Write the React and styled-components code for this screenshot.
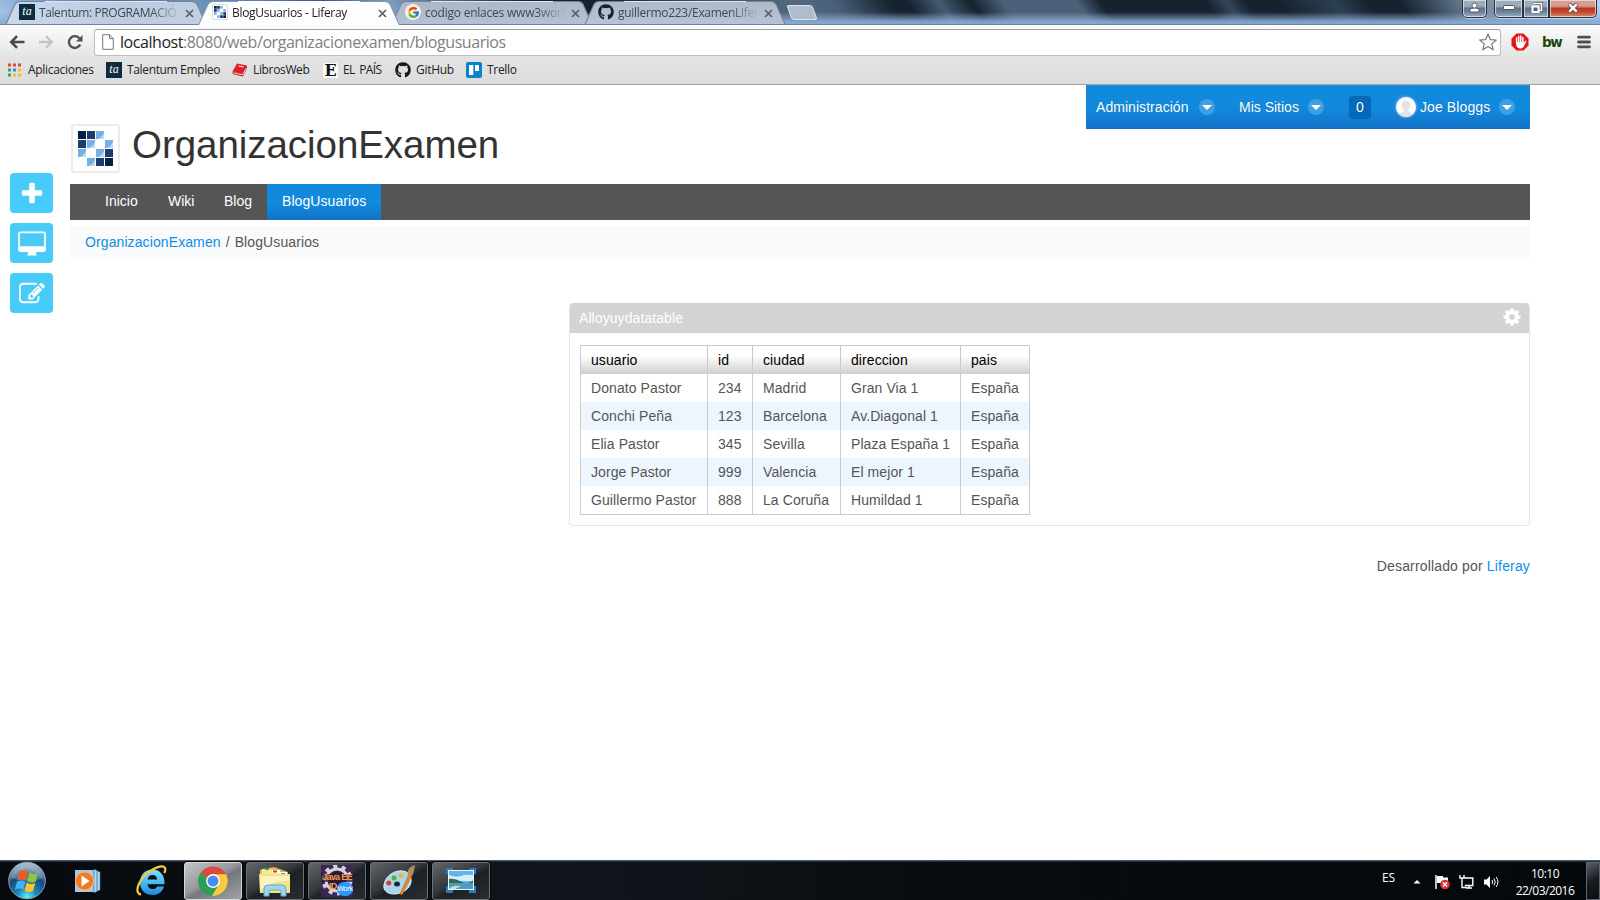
import React from "react";
import styled, { createGlobalStyle } from "styled-components";
import { FaGithub } from "react-icons/fa";
import { FcGoogle } from "react-icons/fc";

const Global = createGlobalStyle`
  *, *::before, *::after { box-sizing: border-box; }
  body { margin: 0; background: #fff; overflow: hidden; }
`;

const UI_FONT = `"Open Sans", "Noto Sans", sans-serif`;
const PAGE_FONT = `"Liberation Sans", Arial, sans-serif`;

const Screen = styled.div`
  width: 1600px;
  height: 900px;
  display: flex;
  flex-direction: column;
  background: #fff;
  font-family: ${PAGE_FONT};
  font-size: 14px;
  color: #555;
  white-space: nowrap;
`;

/* ---------- window frame ---------- */

const TitleBar = styled.header`
  height: 25px;
  flex: none;
  display: flex;
  align-items: flex-start;
  padding-left: 5px;
  border-bottom: 1px solid #6b84a3;
  background:
    linear-gradient(180deg, rgba(136,172,212,0) 0 50%, rgba(136,172,212,.9) 90%, rgba(136,172,212,.95)),
    linear-gradient(55deg, #a9c8ea 0%, #7fa3cc 3%, #4e6c92 8%, #6f93bd 13%, #5d7da5 17%, #3c5577 21%, #7d9cc1 25%, #34455d 31%, #141f2c 34%, #15202c 38%, #3d5269 45%, #526980 50%, #4a6078 52.5%, #16222e 56%, #16222e 57%, #445a72 59%, #16222e 61%, #4c6078 63%, #4c6078 67.5%, #16222e 69%, #16222e 75.5%, #33475b 76.8%, #16222e 78%, #16222e 80%, #2d4053 83.5%, #16222e 85.5%, #16222e 87.5%, #45586d 90%, #76899e 92%, #8da8c4 96%, #b4d0ee 100%);
`;

const Tab = styled.div`
  position: relative;
  width: 202px;
  height: ${(p) => (p.$active ? 25 : 24)}px;
  margin-right: -9px;
  padding: 0 10px ${(p) => (p.$active ? 1 : 0)}px 14px;
  display: flex;
  align-items: center;
  z-index: ${(p) => (p.$active ? 2 : 1)};
  color: ${(p) => (p.$active ? "#222" : "#3f4955")};
  font: 12px/22px ${UI_FONT};
  &::before, &::after {
    content: "";
    position: absolute;
    inset: 0;
  }
  &::before {
    z-index: -2;
    background: ${(p) => (p.$active ? "linear-gradient(90deg, #8199b5 20%, #fff 20% 80%, #8199b5 80%)" : "linear-gradient(90deg, #71849c 20%, #dfe7f0 20% 80%, #71849c 80%)")};
    clip-path: path("M0 25L9.500 4Q11 1 15 1H187Q191 1 192.500 4L202 25z");
  }
  &::after {
    z-index: -1;
    background: ${(p) => p.$fill};
    clip-path: path("M1.200 25L10.500 4.500Q12 2 15 2H187Q190 2 191.500 4.500L200.800 25z");
  }
`;

const TabLabel = styled.span`
  width: 141px;
  margin: 1px 0 0 4px;
  overflow: hidden;
  letter-spacing: ${(p) => p.$track}px;
  mask-image: linear-gradient(90deg, #000 ${(p) => (p.$fade ? 112 : 141)}px, transparent 141px);
`;

const Cross = styled.svg`
  flex: none;
  width: 9px;
  height: 9px;
  margin: 3px 0 0 5px;
`;

const NewTab = styled.div`
  width: 26px;
  height: 15px;
  margin: 5px 0 0 12px;
  transform: skewX(20deg);
  border: 1px solid #dfe6ee;
  border-radius: 3px;
  background: #aebccd;
`;

const WindowButtons = styled.div`
  margin-left: auto;
  margin-right: 3px;
  display: flex;
`;

const WinButton = styled.div`
  width: ${(p) => p.$w}px;
  height: 18px;
  margin-right: ${(p) => p.$gap || 0}px;
  display: flex;
  align-items: center;
  justify-content: center;
  border: 1px solid #26323f;
  border-top: 0;
  border-radius: ${(p) => p.$radius};
  box-shadow: inset 0 0 0 1px rgba(235,243,250,.65), 0 1px 0 rgba(255,255,255,.5);
  background: ${(p) => p.$close
    ? "linear-gradient(#d99c90 0 35%, #b93a20 50%, #c2452b 70%, #dd8d6d)"
    : "linear-gradient(#9dacbb 0 35%, #63758a 50%, #6d8198 70%, #9ab1c9)"};
  svg { margin-top: -2px; }
`;

/* ---------- browser chrome ---------- */

const Chrome = styled.div`
  height: 60px;
  flex: none;
  border-bottom: 1px solid #a3a3a3;
  background: linear-gradient(#fcfcfc, #e3e3e3 55%, #dcdcdc);
`;

const Toolbar = styled.div`
  height: 34px;
  padding: 4px 0 4px 9px;
  display: flex;
  align-items: center;
`;

const ToolIcon = styled.svg`
  flex: none;
  width: ${(p) => p.$w || 16}px;
  height: ${(p) => p.$h || 16}px;
  margin-left: ${(p) => p.$before || 0}px;
  margin-right: ${(p) => p.$gap || 0}px;
`;

const Omnibox = styled.div`
  flex: none;
  width: 1407px;
  height: 27px;
  padding: 0 3px 0 7px;
  display: flex;
  align-items: center;
  background: #fff;
  border: 1px solid #bdbdbd;
  border-top-color: #9f9f9f;
  border-radius: 3px;
`;

const Url = styled.span`
  flex: 1;
  padding-left: 6px;
  font: 16px/24px ${UI_FONT};
  letter-spacing: -0.44px;
  color: #808080;
  b { font-weight: 400; color: #1d1d1d; }
`;

const Bw = styled.span`
  width: 21px;
  margin: 0 14px 0 13px;
  font: 700 13.500px/16px "DejaVu Sans", sans-serif;
  letter-spacing: -1.5px;
  color: #164a0c;
`;

const Bookmarks = styled.nav`
  height: 25px;
  padding: 0 0 3px 6px;
  display: flex;
  align-items: center;
`;

const Bookmark = styled.a`
  width: ${(p) => p.$w}px;
  display: flex;
  align-items: center;
  gap: 5px;
  font: 12px/20px ${UI_FONT};
  letter-spacing: ${(p) => p.$track}px;
  word-spacing: ${(p) => p.$words || 0}px;
  color: #222;
  svg, i { flex: none; }
`;

const TaBadge = styled.i`
  width: 16px;
  height: 16px;
  flex: none;
  background: #0d2c40;
  color: #fff;
  font: italic 12px/14px "Liberation Serif", serif;
  letter-spacing: 0;
  text-align: center;
`;

const SerifBadge = styled.i`
  width: 15px;
  height: 15px;
  background: #fafafa;
  color: #111;
  font: 700 16px/15px "DejaVu Serif", serif;
  letter-spacing: 0;
  text-align: center;
`;

/* ---------- portal page ---------- */

const Page = styled.main`
  flex: 1;
  display: flex;
  min-height: 0;
`;

const Rail = styled.aside`
  width: 70px;
  padding: 88px 0 0 10px;
  display: flex;
  flex-direction: column;
  gap: 10px;
`;

const RailButton = styled.button`
  width: 43px;
  height: 40px;
  padding: 0;
  border: 0;
  border-radius: 4px;
  background: #47cbf8;
  display: flex;
  align-items: center;
  justify-content: center;
  svg { width: 26px; height: 26px; fill: #fff; overflow: visible; }
`;

const Portal = styled.div`
  width: 1460px;
`;

const Top = styled.div`
  height: 99px;
  display: flex;
  justify-content: space-between;
`;

const Brand = styled.div`
  padding: 39px 0 0 1px;
  display: flex;
  align-items: flex-start;
`;

const LogoFrame = styled.div`
  width: 49px;
  height: 49px;
  padding: 5px;
  border: 2px solid #ebebeb;
  border-radius: 3px;
`;

const Title = styled.h1`
  margin: 0 0 0 12px;
  font-size: 38.5px;
  line-height: 41px;
  font-weight: 400;
  letter-spacing: -0.05px;
  color: #333;
`;

const Dockbar = styled.div`
  width: 444px;
  height: 44px;
  padding: 0 0 1px 10px;
  display: flex;
  align-items: center;
  color: #fff;
  background: linear-gradient(#118ade 0 50%, #1272c8);
  border-top: 1px solid #1597ea;
`;

const DockItem = styled.div`
  width: ${(p) => p.$w}px;
  display: flex;
  align-items: center;
  letter-spacing: ${(p) => p.$track || 0}px;
  text-shadow: 0 0 1px rgba(0,0,0,.2);
`;

const Caret = styled.i`
  width: 16px;
  height: 16px;
  margin-left: ${(p) => p.$gap}px;
  border-radius: 50%;
  background: #3f9fe3;
  display: flex;
  align-items: center;
  justify-content: center;
  &::before {
    content: "";
    border: 5px solid transparent;
    border-top-color: #fff;
    border-bottom: 0;
  }
`;

const Count = styled.div`
  width: 22px;
  height: 23px;
  border-radius: 4px;
  background: #0668b8;
  text-align: center;
  line-height: 23px;
`;

const Avatar = styled.div`
  width: 20px;
  height: 20px;
  margin-right: 4px;
  border-radius: 50%;
  overflow: hidden;
  background: #fff;
  box-shadow: 0 0 2px 1px #6b9ff0;
`;

const Nav = styled.nav`
  height: 36px;
  padding-left: 20px;
  display: flex;
  background: #555;
`;

const NavItem = styled.a`
  width: ${(p) => p.$w}px;
  padding-left: 15px;
  line-height: 34px;
  letter-spacing: ${(p) => (p.$active ? 0.08 : 0)}px;
  color: #fff;
  background: ${(p) => (p.$active ? "linear-gradient(#118ade 0 50%, #1272c8)" : "none")};
`;

const Breadcrumb = styled.div`
  height: 32px;
  margin-top: 6px;
  padding-left: 15px;
  border-radius: 3px;
  background: #fafafa;
  line-height: 32px;
  letter-spacing: 0.1px;
`;

const Slash = styled.span`
  margin: 0 5px;
`;

const Link = styled.a`
  color: #0d8ee8;
`;

const Portlet = styled.section`
  width: 961px;
  height: 223px;
  margin: 45px 0 0 auto;
  border: 1px solid #e6e6e6;
  border-top: 0;
  border-radius: 4px;
  overflow: hidden;
`;

const PortletHead = styled.div`
  height: 30px;
  margin: 0 -1px;
  padding: 0 8px 0 10px;
  display: flex;
  align-items: center;
  justify-content: space-between;
  color: #fff;
  letter-spacing: 0.08px;
  background: #d3d3d3;
  svg { width: 20px; height: 20px; fill: #fff; margin-top: -3px; }
`;

const Table = styled.table`
  margin: 12px 0 0 10px;
  table-layout: fixed;
  width: 450px;
  border-collapse: separate;
  border-spacing: 0;
  border: 1px solid #cbcbcb;
  letter-spacing: 0.08px;
`;

const Th = styled.th`
  width: ${(p) => p.$w}px;
  height: 28px;
  padding: 0 0 0 10px;
  border-left: ${(p) => (p.$first ? 0 : 1)}px solid #cbcbcb;
  text-align: left;
  font-weight: 400;
  color: #000;
  background: linear-gradient(#fff 0 35%, #cecece);
`;

const Row = styled.tr`
  background: ${(p) => (p.$odd ? "#edf5ff" : "#fff")};
`;

const Td = styled.td`
  height: 28px;
  padding: 0 0 0 10px;
  border-left: ${(p) => (p.$first ? 0 : 1)}px solid #cbcbcb;
`;

const Footer = styled.footer`
  margin-top: 30px;
  text-align: right;
  line-height: 20px;
  letter-spacing: 0.16px;
`;

/* ---------- taskbar ---------- */

const Taskbar = styled.footer`
  height: 40px;
  flex: none;
  display: flex;
  align-items: center;
  border-top: 1px solid #4a5561;
  box-shadow: inset 0 1px 0 #26303a;
  background: linear-gradient(90deg, #06090d, #10161c 35%, #080c10 60%, #05080b);
`;

const Launcher = styled.div`
  width: ${(p) => p.$w}px;
  height: 39px;
  padding-right: ${(p) => p.$shift || 0}px;
  display: flex;
  align-items: center;
  justify-content: center;
`;

const TaskButton = styled.div`
  width: 58px;
  height: 38px;
  margin-right: 4px;
  display: flex;
  align-items: center;
  justify-content: center;
  border: 1px solid ${(p) => (p.$active ? "#d5d7d9" : "#6b7177")};
  border-radius: 3px;
  box-shadow: 0 0 0 1px #05080b;
  background: ${(p) => p.$active
    ? "linear-gradient(150deg, #c3c5c7, #96999c 45%, #74787c 55%, #a1a4a7)"
    : "linear-gradient(150deg, #62676b, #33383d 45%, #1c2126 55%, #282d32)"};
`;

const EclipseIcon = styled.div`
  width: 32px;
  height: 32px;
  display: grid;
  grid-template: 8px 9px 1fr / 32px;
  overflow: hidden;
  background: #3d2557;
  color: #f59a4c;
  font: 700 9px/9px "Liberation Sans", sans-serif;
  letter-spacing: -0.7px;
  > svg { grid-area: 1 / 1 / 4 / 2; }
  > span { grid-area: 2 / 1; text-align: center; z-index: 1; }
`;

const EclipseLower = styled.div`
  grid-area: 3 / 1;
  z-index: 1;
  display: flex;
  justify-content: space-between;
  padding-left: 8px;
  b {
    width: 16px;
    height: 14px;
    border-radius: 7px;
    background: #2e97f8;
    color: #fff;
    font: 7px/14px "DejaVu Sans", sans-serif;
    letter-spacing: -0.6px;
    text-align: center;
  }
`;

const Tray = styled.div`
  margin-left: auto;
  display: flex;
  align-items: center;
  color: #fff;
  font: 12px/17px ${UI_FONT};
  letter-spacing: -0.5px;
`;

const Lang = styled.span`
  width: 31px;
  margin-top: -7px;
  letter-spacing: -0.2px;
`;

const TrayIcon = styled.svg`
  width: ${(p) => p.$w}px;
  height: 16px;
  margin: 2px ${(p) => p.$gap}px 0 0;
`;

const Clock = styled.div`
  width: 60px;
  text-align: center;
  margin-right: 11px;
  padding-top: 2px;
`;

const ShowDesktop = styled.div`
  width: 14px;
  height: 38px;
  border: 1px solid #5d646b;
  background: linear-gradient(150deg, #5a6066, #161b20 50%, #0c1014);
`;

/* ---------- drawings ---------- */

const LiferayMark = ({ size }) => {
  const d = "#061f3f", m = "#1c3c70", l = "#74b0e2";
  const cells = [
    [0, 0, d], [1, 0, m], [2, 0, l], [0, 1, m], [1, 1, l], [3, 1, l],
    [0, 2, l], [2, 2, l], [3, 2, m], [1, 3, l], [2, 3, m], [3, 3, d],
  ];
  return (
    <svg width={size} height={size} viewBox="0 0 35 35">
      {cells.map(([x, y, c]) => (
        <g key={`${x}${y}`}>
          <rect x={x * 9} y={y * 9} width="8" height="8" fill={c} />
          {c === l && <path d={`M${x * 9 + 8} ${y * 9 + 8}H${x * 9 + 2}Q${x * 9 + 6} ${y * 9 + 6} ${x * 9 + 8} ${y * 9 + 2}z`} fill="#b9d8f2" />}
        </g>
      ))}
    </svg>
  );
};

const Favicon = styled.div`
  width: 16px;
  height: 16px;
  display: flex;
  align-items: center;
  justify-content: center;
  border-radius: 1px;
  background: #fff;
  border: 1px solid #ddd;
`;

const RoundIcon = styled.div`
  width: 16px;
  height: 16px;
  display: flex;
  align-items: center;
  justify-content: center;
  border-radius: 50%;
  background: ${(p) => p.$bg};
  color: #1b1f24;
`;

const Close = () => (
  <Cross viewBox="0 0 9 9"><path d="M1 1l7 7M8 1l-7 7" stroke="#5b5f64" strokeWidth="1.7" /></Cross>
);

const BrowserTab = ({ icon, label, active, fade, track, fill }) => (
  <Tab $active={active} $fill={fill}>
    {icon}
    <TabLabel $fade={fade} $track={track}>{label}</TabLabel>
    <Close />
  </Tab>
);

const PLUS = "M1600 736v192q0 40-28 68t-68 28h-416v416q0 40-28 68t-68 28h-192q-40 0-68-28t-28-68v-416h-416q-40 0-68-28t-28-68v-192q0-40 28-68t68-28h416v-416q0-40 28-68t68-28h192q40 0 68 28t28 68v416h416q40 0 68 28t28 68z";
const DESKTOP = "M1728 992v-832q0-13-9.500-22.500t-22.500-9.500h-1600q-13 0-22.500 9.500t-9.500 22.500v832q0 13 9.500 22.500t22.500 9.500h1600q13 0 22.500-9.500t9.500-22.500zm128-832v1088q0 66-47 113t-113 47h-544q0 37 16 77.500t32 71 16 43.500q0 26-19 45t-45 19h-512q-26 0-45-19t-19-45q0-14 16-44t32-70 16-78h-544q-66 0-113-47t-47-113v-1088q0-66 47-113t113-47h1600q66 0 113 47t47 113z";
const EDIT = "M888 1184l116-116-152-152-116 116v56h96v96h56zm440-720q-16-16-33 1l-350 350q-17 17-1 33t33-1l350-350q17-17 1-33zm80 594v190q0 119-84.500 203.500t-203.500 84.500h-832q-119 0-203.500-84.500t-84.500-203.500v-832q0-119 84.500-203.500t203.500-84.500h832q63 0 117 25 15 7 18 23 3 17-9 29l-49 49q-14 14-32 8-23-6-45-6h-832q-66 0-113 47t-47 113v832q0 66 47 113t113 47h832q66 0 113-47t47-113v-126q0-13 9-22l64-64q15-15 35-7t20 29zm-96-738l288 288-672 672h-288v-288zm444 132l-92 92-288-288 92-92q28-28 68-28t68 28l152 152q28 28 28 68t-28 68z";
const COG = "M1152 896q0-106-75-181t-181-75-181 75-75 181 75 181 181 75 181-75 75-181zm512-109v222q0 12-8 23t-20 13l-185 28q-19 54-39 91 35 50 107 138 10 12 10 25t-9 23q-27 37-99 108t-94 71q-12 0-26-9l-138-108q-44 23-91 38-16 136-29 186-7 28-36 28h-222q-14 0-24.500-8.500t-11.500-21.500l-28-184q-49-16-90-37l-141 107q-10 9-25 9-14 0-25-11-126-114-165-168-7-10-7-23 0-12 8-23 15-21 51-66.500t54-70.500q-27-50-41-99l-183-27q-13-2-21-12.500t-8-23.500v-222q0-12 8-23t19-13l186-28q14-46 39-92-40-57-107-138-10-12-10-24 0-10 9-23 26-36 98.500-107.500t94.500-71.500q13 0 26 10l138 107q44-23 91-38 16-136 29-186 7-28 36-28h222q14 0 24.500 8.500t11.500 21.500l28 184q49 16 90 37l142-107q9-9 24-9 13 0 25 10 129 119 165 170 7 8 7 22 0 12-8 23-15 21-51 66.500t-54 70.500q26 50 41 98l183 28q13 2 21 12.500t8 23.500z";

const Glyph = ({ d, top = 0 }) => <svg viewBox={`0 ${-top} 1792 1792`}><path d={d} /></svg>;

const StartOrb = () => (
  <svg width="40" height="39" viewBox="0 0 40 39">
    <defs>
      <radialGradient id="orb" cx=".5" cy=".95" r=".9">
        <stop offset="0" stopColor="#5ff0ff" /><stop offset=".3" stopColor="#1c86bd" />
        <stop offset=".65" stopColor="#174a78" /><stop offset="1" stopColor="#a5bccd" />
      </radialGradient>
    </defs>
    <circle cx="20" cy="19.500" r="18.300" fill="url(#orb)" stroke="#86a5bc" />
    <path d="M4 17a16.500 16.500 0 0 1 32 0q-8 4-16 3T4 17z" fill="#fff" opacity=".22" />
    <path d="M12.500 10.500q4.500-2.600 8.500.5l-2.200 8.500q-4.200-2.600-8.500 0z" fill="#ef5a22" />
    <path d="M22.300 11.500q4.200 2.800 8.700.5l-2.300 8.500q-4.300 2.500-8.600-.4z" fill="#8cc63e" />
    <path d="M10 20.800q4.300-2.500 8.400 0l-2.200 8q-4.200-2.500-8.400 0z" fill="#46b0ee" />
    <path d="M19.700 21.500q4.300 2.800 8.600.4l-2.200 8q-4.300 2.500-8.500-.4z" fill="#fdc52b" />
  </svg>
);

const MediaPlayer = () => (
  <svg width="28" height="28" viewBox="0 0 28 28">
    <path d="M1 3h22v22H1z" fill="#7fb3d6" /><path d="M20 2l3 2v20l-3 2zM23 4l3 1v18l-3 1z" fill="#b2d6ec" stroke="#4f86ad" strokeWidth=".6" />
    <path d="M1 3h18v22H1z" fill="#a5cbe4" />
    <circle cx="10.500" cy="14" r="9" fill="#f07a1f" stroke="#f8b27a" /><path d="M7.500 8.500v11l8-5.500z" fill="#fff" />
  </svg>
);

const Explorer = () => (
  <svg width="32" height="32" viewBox="0 0 32 32" fill="none">
    <defs>
      <linearGradient id="ie" x1="0" y1="0" x2="0" y2="1">
        <stop offset="0" stopColor="#7fdcfb" /><stop offset=".5" stopColor="#46bdf3" /><stop offset="1" stopColor="#1f86d8" />
      </linearGradient>
    </defs>
    <path d="M17.500 4.500C25 4.500 30 10 29.500 19.200H12.500c.3 3 2.200 4.800 5 4.800 2.300 0 3.800-.9 4.700-2.600h6.800C27.500 26.500 23.500 30 17.300 30 9.800 30 5 24.800 5 17.300S10 4.500 17.500 4.500zM12.600 14.600h9.700c-.3-2.900-2-4.600-4.800-4.600s-4.500 1.700-4.900 4.600z" fill="url(#ie)" fillRule="evenodd" />
    <path d="M6 29.500C-1 28.500 3 16 12 8.500S28.500 0 30 3c.6 1.500.2 3.200-.8 5" stroke="#f7ca35" strokeWidth="2.200" />
  </svg>
);

const ChromeIcon = () => (
  <svg width="30" height="30" viewBox="0 0 30 30">
    <path d="M15 15L2.400 7.300A14.700 14.700 0 0 1 28 8.500z" fill="#dd4a3c" />
    <path d="M15 15L28 8.500A14.700 14.700 0 0 1 14 29.700z" fill="#fcca3f" />
    <path d="M2.400 7.300L15 15l-1 14.700A14.700 14.700 0 0 1 2.400 7.300z" fill="#2b9f56" />
    <path d="M15 8.300h13a14.700 14.700 0 0 1-7.500 20L14 29.700l7-11.500z" fill="#fcca3f" />
    <path d="M9 18L2.400 7.300a14.700 14.700 0 0 0 11.600 22.400L20 20z" fill="#2b9f56" />
    <circle cx="15" cy="15" r="6.900" fill="#fff" /><circle cx="15" cy="15" r="5.500" fill="#4a8af4" />
  </svg>
);

const Folder = () => (
  <svg width="34" height="32" viewBox="0 0 34 32">
    <path d="M5 4l11-2 14 5v19H2V5z" fill="#dcb653" />
    <path d="M4 4h9l2 3h14v6H3z" fill="#f8e69b" /><path d="M7 3h4v2H7z" fill="#3ba03b" />
    <path d="M14 5h8v3h-8z" fill="#fff" /><path d="M15 5.500h4v2h-4z" fill="#d33" />
    <path d="M22 7h7v3h-7z" fill="#fff" /><path d="M23 8h4v1.500h-4z" fill="#38a0e8" />
    <path d="M1 9h31v19H2z" fill="#f7e08a" /><path d="M2 11h29v5Q12 16 2 25z" fill="#fdf3bd" />
    <path d="M6 31v-7q0-4 4-4h14q4 0 4 4v7h-5v-4q0-2-2-2h-8q-2 0-2 2v4z" fill="#9dd6ee" stroke="#5fa9cb" />
  </svg>
);

const Paint = () => (
  <svg width="34" height="33" viewBox="0 0 34 33">
    <path d="M17 7c8-1 13 4 12 11S20 30 12 30C5 30 1 26 2 21 3 14 9 8 17 7z" fill="#a9d6ee" stroke="#e4f4fc" />
    <ellipse cx="15" cy="20" rx="3" ry="2.500" fill="#1d2630" />
    <circle cx="12" cy="14" r="2.500" fill="#4fb436" /><circle cx="19" cy="11.500" r="2.500" fill="#f2b632" /><circle cx="6.800" cy="19" r="2.500" fill="#dd3b2a" />
    <path d="M20 31l-2-1 9-20 3 1z" fill="#ee8b26" stroke="#a85510" strokeWidth=".5" />
    <path d="M26 11c-1-5 1-8 7-10-1 5-1 8-3 11z" fill="#b98a58" />
  </svg>
);

const Viewer = () => (
  <svg width="32" height="28" viewBox="0 0 32 28">
    <path d="M1 1h7v6H1zM24 1h7v6h-7zM1 19h7v7H1zM24 19h7v7h-7z" fill="#3277c2" />
    <path d="M3 3h26v20H3z" fill="#eaf5fc" /><path d="M4 4h24v18H4z" fill="#62b3ea" />
    <path d="M4 8q7 3 12 1t12-1v6H4z" fill="#d9edf9" /><path d="M4 12q6-1 12 2.500t12-1V16H4z" fill="#2f6a4c" />
    <path d="M4 16h24v6H4z" fill="#4a9cc0" /><path d="M4 22q4-4 12-3l-6 3z" fill="#d9dfbd" />
  </svg>
);

const columns = [["usuario", 126], ["id", 45], ["ciudad", 88], ["direccion", 120], ["pais", 69]];
const rows = [
  ["Donato Pastor", "234", "Madrid", "Gran Via 1", "España"],
  ["Conchi Peña", "123", "Barcelona", "Av.Diagonal 1", "España"],
  ["Elia Pastor", "345", "Sevilla", "Plaza España 1", "España"],
  ["Jorge Pastor", "999", "Valencia", "El mejor 1", "España"],
  ["Guillermo Pastor", "888", "La Coruña", "Humildad 1", "España"],
];
const appColors = ["#e8453c", "#e8453c", "#e8453c", "#35a853", "#4285f4", "#f9bb2d", "#35a853", "#f9bb2d", "#f9bb2d"];

export default function App() {
  return (
    <Screen>
      <Global />
      <TitleBar>
        <BrowserTab icon={<TaBadge>ta</TaBadge>} label="Talentum: PROGRAMACIÓ" fade track={-0.4} fill="linear-gradient(90deg, #c9d8ea, #bccbdd 60%, #c2d0e1)" />
        <BrowserTab active icon={<Favicon><LiferayMark size={12} /></Favicon>} label="BlogUsuarios - Liferay" track={-0.3} fill="linear-gradient(#fff, #fcfcfc)" />
        <BrowserTab icon={<RoundIcon $bg="#eef1f5"><FcGoogle size={13} /></RoundIcon>} label="codigo enlaces www3worl" fade track={-0.22} fill="linear-gradient(#acb7c5, #b4c1d2)" />
        <BrowserTab icon={<RoundIcon $bg="transparent"><FaGithub size={16} /></RoundIcon>} label="guillermo223/ExamenLifer" fade track={-0.3} fill="linear-gradient(#aeb9c7, #b6c3d4)" />
        <NewTab />
        <WindowButtons>
          <WinButton $w={25} $gap={7} $radius="0 0 5px 5px">
            <svg width="11" height="11" viewBox="0 0 11 11"><path d="M1 10V7.500q1-1.500 4.500-1.500T10 7.500V10z" fill="#fff" stroke="#4c5663" strokeWidth=".9" /><circle cx="5.500" cy="3.500" r="2.500" fill="#fff" stroke="#4c5663" strokeWidth=".9" /></svg>
          </WinButton>
          <WinButton $w={29} $radius="0 0 0 5px">
            <svg width="12" height="5" viewBox="0 0 12 5"><rect x=".5" y=".5" width="11" height="4" rx="1" fill="#fff" stroke="#4c5663" /></svg>
          </WinButton>
          <WinButton $w={26} $radius="0">
            <svg width="13" height="12" viewBox="0 0 13 12"><path d="M4.500 1.500h7v7h-2" fill="none" stroke="#4c5663" strokeWidth="3" /><path d="M4 1.500h7.500v7H9" fill="none" stroke="#fff" strokeWidth="1.600" /><path d="M2.500 4.500h6v5.500h-6z" fill="#556374" stroke="#fff" strokeWidth="2" /></svg>
          </WinButton>
          <WinButton $w={48} $close $radius="0 0 5px 0">
            <svg width="12" height="10" viewBox="0 0 12 10"><path d="M2 1l8 8M10 1L2 9" stroke="#4c4f5c" strokeWidth="4" /><path d="M2.300 1.300l7.400 7.400M9.700 1.300L2.300 8.700" stroke="#fff" strokeWidth="2.400" /></svg>
          </WinButton>
        </WindowButtons>
      </TitleBar>

      <Chrome>
        <Toolbar>
          <ToolIcon $gap={13} viewBox="0 0 16 16"><path d="M15.500 8H2.500M8 2.200L2.200 8 8 13.800" fill="none" stroke="#484848" strokeWidth="2.500" /></ToolIcon>
          <ToolIcon $gap={13} viewBox="0 0 16 16"><path d="M1 8h12.500M8 2.200L13.800 8 8 13.800" fill="none" stroke="#c4c4c4" strokeWidth="2.300" /></ToolIcon>
          <ToolIcon $gap={11} viewBox="0 0 16 16"><path d="M13.200 10.500A5.900 5.900 0 1 1 12.300 4.200" fill="none" stroke="#505050" strokeWidth="2.400" /><path d="M15.500 1v6.500H9z" fill="#505050" /></ToolIcon>
          <Omnibox>
            <ToolIcon $w={12} $h={16} viewBox="0 0 12 16"><path d="M.7.700h6.800l3.800 4v10.600H.7zM7.500.700v4h3.800" fill="#fff" stroke="#777" /></ToolIcon>
            <Url><b>localhost</b>:8080/web/organizacionexamen/blogusuarios</Url>
            <ToolIcon $w={18} $h={18} viewBox="0 0 18 18"><path d="M9 1l2.300 5.600 6 .4-4.600 3.900 1.500 5.900L9 13.600l-5.200 3.200 1.500-5.900L.7 7l6-.4z" fill="#fff" stroke="#777" strokeWidth="1.200" strokeLinejoin="round" /></ToolIcon>
          </Omnibox>
          <ToolIcon $before={10} $w={18} $h={18} viewBox="0 0 18 18">
            <path d="M5.500.5h7l5 5v7l-5 5h-7l-5-5v-7z" fill="#e3151c" />
            <path d="M5.600 10V5M7.700 9V3.500M9.800 9V3M11.900 9V4.500" stroke="#fff" strokeWidth="1.500" strokeLinecap="round" />
            <path d="M4.900 9h7.700v1l1.800-2.200q1-.5 1 .4L12.500 14q-1 1.500-3.500 1.500T5.500 13z" fill="#fff" />
          </ToolIcon>
          <Bw>bw</Bw>
          <ToolIcon $w={14} $h={14} viewBox="0 0 14 14"><path d="M1.500 2.200h11M1.500 7h11M1.500 11.800h11" stroke="#505050" strokeWidth="2.800" strokeLinecap="round" /></ToolIcon>
        </Toolbar>
        <Bookmarks>
          <Bookmark $w={100} $track={-0.3}>
            <svg width="17" height="14" viewBox="0 0 17 14">
              {appColors.map((c, i) => <rect key={i} x={2 + (i % 3) * 5} y={.5 + Math.floor(i / 3) * 5} width="3" height="3" fill={c} />)}
            </svg>
            Aplicaciones
          </Bookmark>
          <Bookmark $w={126} $track={-0.35}><TaBadge>ta</TaBadge>Talentum Empleo</Bookmark>
          <Bookmark $w={91} $track={-0.35}>
            <svg width="16" height="14" viewBox="0 0 16 14"><path d="M5 .5l10 2L10.500 11 .5 8.500z" fill="#dd1f26" /><path d="M.5 8.500L10.500 11 15 2.500v3L10.800 13.500.8 11z" fill="#b5141a" /><path d="M1.500 9.800l9 2.200L14.500 5" stroke="#fff" fill="none" strokeWidth=".8" /><path d="M6.500 3l5 1" stroke="#fff" /></svg>
            LibrosWeb
          </Bookmark>
          <Bookmark $w={72} $track={-0.6} $words={2}><SerifBadge>E</SerifBadge>EL PAÍS</Bookmark>
          <Bookmark $w={71} $track={-0.3}><FaGithub size={16} color="#16191d" />GitHub</Bookmark>
          <Bookmark $w={60} $track={-0.3}>
            <svg width="16" height="16" viewBox="0 0 16 16"><rect width="16" height="16" rx="2" fill="#0a82cf" /><rect x="3" y="3" width="4.300" height="10" rx=".6" fill="#fff" /><rect x="9" y="3" width="4" height="6" rx=".6" fill="#fff" /></svg>
            Trello
          </Bookmark>
        </Bookmarks>
      </Chrome>

      <Page>
        <Rail>
          <RailButton><Glyph d={PLUS} top={64} /></RailButton>
          <RailButton><Glyph d={DESKTOP} top={100} /></RailButton>
          <RailButton><Glyph d={EDIT} top={64} /></RailButton>
        </Rail>
        <Portal>
          <Top>
            <Brand>
              <LogoFrame><LiferayMark size={35} /></LogoFrame>
              <Title>OrganizacionExamen</Title>
            </Brand>
            <Dockbar>
              <DockItem $w={143} $track={0.05}>Administración<Caret $gap={10} /></DockItem>
              <DockItem $w={110}>Mis Sitios<Caret $gap={9} /></DockItem>
              <DockItem $w={47}><Count>0</Count></DockItem>
              <DockItem $w={120} $track={0.1}>
                <Avatar><svg width="20" height="20" viewBox="0 0 20 20"><circle cx="10" cy="8" r="4.600" fill="#e4e4e4" /><path d="M8 11h4v3l4 2.500V20H4v-3.500L8 14z" fill="#e4e4e4" /></svg></Avatar>
                Joe Bloggs<Caret $gap={9} />
              </DockItem>
            </Dockbar>
          </Top>
          <Nav>
            <NavItem $w={63}>Inicio</NavItem>
            <NavItem $w={56}>Wiki</NavItem>
            <NavItem $w={58}>Blog</NavItem>
            <NavItem $w={114} $active>BlogUsuarios</NavItem>
          </Nav>
          <Breadcrumb><Link>OrganizacionExamen</Link><Slash>/</Slash>BlogUsuarios</Breadcrumb>
          <Portlet>
            <PortletHead>Alloyuydatatable<Glyph d={COG} /></PortletHead>
            <Table>
              <thead>
                <tr>{columns.map(([name, w], i) => <Th key={name} $w={w} $first={i === 0}>{name}</Th>)}</tr>
              </thead>
              <tbody>
                {rows.map((r, y) => (
                  <Row key={r[0]} $odd={y % 2 === 1}>
                    {r.map((c, i) => <Td key={i} $first={i === 0}>{c}</Td>)}
                  </Row>
                ))}
              </tbody>
            </Table>
          </Portlet>
          <Footer>Desarrollado por <Link>Liferay</Link></Footer>
        </Portal>
      </Page>

      <Taskbar>
        <Launcher $w={54}><StartOrb /></Launcher>
        <Launcher $w={68}><MediaPlayer /></Launcher>
        <Launcher $w={62} $shift={5}><Explorer /></Launcher>
        <TaskButton $active><ChromeIcon /></TaskButton>
        <TaskButton><Folder /></TaskButton>
        <TaskButton>
          <EclipseIcon>
            <svg viewBox="0 0 32 32" width="32" height="32"><circle cx="16" cy="15" r="11" fill="none" stroke="#d5d5d5" strokeWidth="3" /><circle cx="16" cy="15" r="13.500" fill="none" stroke="#d5d5d5" strokeWidth="4" strokeDasharray="4 4.500" /><circle cx="16" cy="15" r="9" fill="#2b1b33" /><path d="M0 9h32v8H0z" fill="#2b1b33" opacity=".75" /></svg>
            <span>Java EE</span>
            <EclipseLower>ID<b>Work</b></EclipseLower>
          </EclipseIcon>
        </TaskButton>
        <TaskButton><Paint /></TaskButton>
        <TaskButton><Viewer /></TaskButton>
        <Tray>
          <Lang>ES</Lang>
          <TrayIcon $w={8} $gap={13} viewBox="0 0 8 16"><path d="M.5 9.500L4 6l3.500 3.500z" fill="#fff" /></TrayIcon>
          <TrayIcon $w={17} $gap={8} viewBox="0 0 17 16"><path d="M2 1v14" stroke="#fff" strokeWidth="1.500" /><path d="M3 2h6v1.500h5V9H3z" fill="#fff" /><circle cx="11" cy="10.500" r="4.800" fill="#d9362e" /><path d="M9 8.500l4 4M13 8.500l-4 4" stroke="#fff" strokeWidth="1.400" /></TrayIcon>
          <TrayIcon $w={15} $gap={9} viewBox="0 0 15 16"><path d="M5.500 4h8.300v7.500h-8M7 14h6M10 12v2M1 1v3h4V1M3 4v9.500h5" fill="none" stroke="#fff" strokeWidth="1.400" /></TrayIcon>
          <TrayIcon $w={17} $gap={15} viewBox="0 0 17 16"><path d="M1 5.500h2.500L7 2v12l-3.500-3.500H1z" fill="#fff" /><path d="M9 6q1.500 2 0 4M11 4.500q2.500 3.500 0 7M13.200 3q3.500 5 0 10" fill="none" stroke="#fff" /></TrayIcon>
          <Clock>10:10<br />22/03/2016</Clock>
          <ShowDesktop />
        </Tray>
      </Taskbar>
    </Screen>
  );
}
